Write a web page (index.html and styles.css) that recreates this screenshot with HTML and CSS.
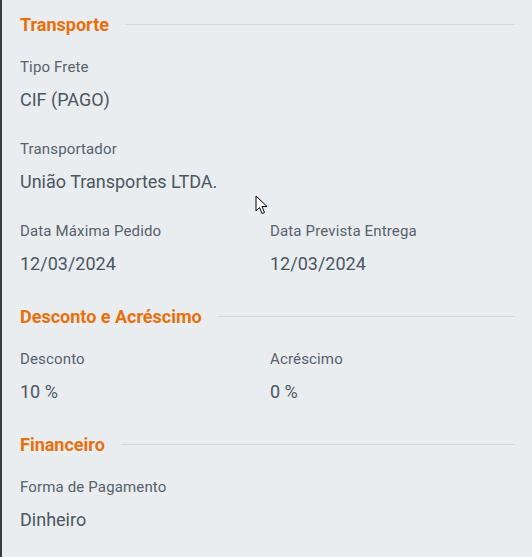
FILE: index.html
```html
<!DOCTYPE html>
<html lang="pt-BR">
<head>
    <meta charset="UTF-8">
    <meta name="viewport" content="width=device-width, initial-scale=1.0">
    <title>Pedido</title>
    <link rel="stylesheet" href="styles.css">
</head>
<body>
    <div class="painel">
        <div class="secao">
            <h3 class="titulo">Transporte</h3>
            <div class="campo">
                <div class="rotulo">Tipo Frete</div>
                <div class="valor">CIF (PAGO)</div>
            </div>
            <div class="campo">
                <div class="rotulo">Transportador</div>
                <div class="valor">União Transportes LTDA.</div>
            </div>
            <div class="linha">
                <div class="campo">
                    <div class="rotulo">Data Máxima Pedido</div>
                    <div class="valor">12/03/2024</div>
                </div>
                <div class="campo">
                    <div class="rotulo">Data Prevista Entrega</div>
                    <div class="valor">12/03/2024</div>
                </div>
            </div>
        </div>

        <div class="secao">
            <h3 class="titulo">Desconto e Acréscimo</h3>
            <div class="linha">
                <div class="campo">
                    <div class="rotulo">Desconto</div>
                    <div class="valor">10 %</div>
                </div>
                <div class="campo">
                    <div class="rotulo">Acréscimo</div>
                    <div class="valor">0 %</div>
                </div>
            </div>
        </div>

        <div class="secao">
            <h3 class="titulo">Financeiro</h3>
            <div class="campo">
                <div class="rotulo">Forma de Pagamento</div>
                <div class="valor">Dinheiro</div>
            </div>
        </div>

        <!-- ponteiro do mouse que aparece na captura -->
        <svg class="cursor" width="14" height="21" viewBox="0 0 14 21">
            <path d="M1 1 L1 16 L4.5 12.5 L7 18.5 L9.5 17.5 L7 11.5 L12 11.5 Z" fill="#fff" stroke="#000" stroke-width="1" stroke-linejoin="round"/>
        </svg>
    </div>
</body>
</html>
```

FILE: styles.css
```css
body {
    margin: 0;
    padding: 0;
    background-color: #eaedf0;
    font-family: Roboto, "Noto Sans", Arial, sans-serif;
}
.painel {
    position: relative;
    min-height: 557px;
    box-sizing: border-box;
    border-left: 2px solid #3a3a3a;
    padding: 8px 17px 0 18px;
}
.secao {
    margin-bottom: 13px;
}
.titulo {
    display: flex;
    align-items: center;
    margin: 0;
    height: 32px;
    font-size: 18px;
    font-weight: 700;
    color: #e8700c;
}
.titulo::after {
    content: "";
    flex-grow: 1;
    height: 1px;
    margin-left: 16px;
    background-color: #d3d7db;
}
.campo {
    padding-top: 16px;
    height: 66px;
}
.titulo + .campo, .titulo + .linha .campo {
    padding-top: 17px;
}
.rotulo {
    font-size: 15px;
    letter-spacing: 0.15px;
    line-height: 20px;
    color: #56626c;
}
.valor {
    margin-top: 12px;
    font-size: 18px;
    line-height: 22px;
    color: #4a5661;
}
.linha {
    display: grid;
    grid-template-columns: 250px 1fr;
}
.cursor {
    position: absolute;
    left: 253px;
    top: 195px;
}
```
